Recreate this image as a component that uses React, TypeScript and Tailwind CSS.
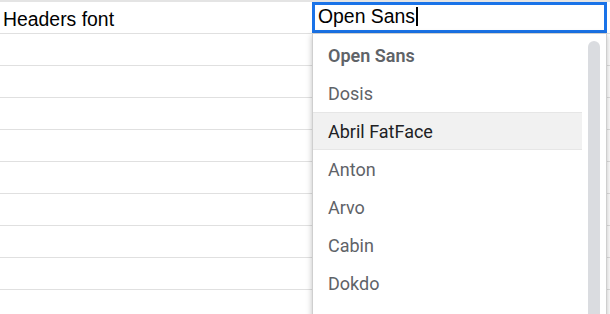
import React from "react";

const items = [
  { label: "Open Sans", kind: "bold" },
  { label: "Dosis", kind: "normal" },
  { label: "Abril FatFace", kind: "active" },
  { label: "Anton", kind: "normal" },
  { label: "Arvo", kind: "normal" },
  { label: "Cabin", kind: "normal" },
  { label: "Dokdo", kind: "normal" },
];

export default function App() {
  const arial = { fontFamily: '"Liberation Sans", Arial, sans-serif' };
  const roboto = { fontFamily: 'Roboto, "Liberation Sans", sans-serif' };
  return (
    <div className="relative w-[610px] h-[314px] overflow-hidden bg-white border-t-2 border-[#e4e4e4]">
      <div className="flex flex-col">
        <div className="flex h-[32px] border-b border-[#e0e0e0]">
          <div
            className="w-[312px] pl-[3px] pt-[6px] text-[19.4px] leading-[22px] text-black"
            style={arial}
          >
            Headers font
          </div>
          <div className="relative w-[295px] h-[31px] border-[3px] border-[#1a73e8] bg-white">
            <div
              className="flex items-center pl-[3px] text-[19.4px] leading-[22px] text-black"
              style={arial}
            >
              <span>Open Sans</span>
              <span className="ml-[1px] inline-block w-[2px] h-[19px] bg-black" />
            </div>
            <div className="absolute right-[-3px] bottom-[-5px] w-[4px] h-[5px] bg-[#1a73e8]" />
          </div>
        </div>
        {Array.from({ length: 9 }).map((_, i) => (
          <div key={i} className="h-[32px] shrink-0 border-b border-[#e0e0e0]" />
        ))}
      </div>

      <div className="absolute left-[312px] top-[31px] w-[295px] h-[300px] bg-white border border-[#cfcfcf] shadow-[0_2px_6px_rgba(0,0,0,0.25)] flex">
        <div className="w-[269px] pt-[2px] flex flex-col">
          {items.map((it, i) => (
            <div
              key={i}
              className={
                "h-[38px] shrink-0 flex items-center pl-[15px] text-[18px] " +
                (it.kind === "active"
                  ? "bg-[#f1f1f1] border-y border-[#e6e6e6] text-[#202124]"
                  : it.kind === "bold"
                  ? "font-semibold text-[#5f6368]"
                  : "text-[#5f6368]")
              }
              style={roboto}
            >
              {it.label}
            </div>
          ))}
        </div>
        <div className="flex-1 pl-[6px] pt-[7px]">
          <div className="w-[12px] h-[300px] rounded-full bg-[#dadce0]" />
        </div>
      </div>
    </div>
  );
}
